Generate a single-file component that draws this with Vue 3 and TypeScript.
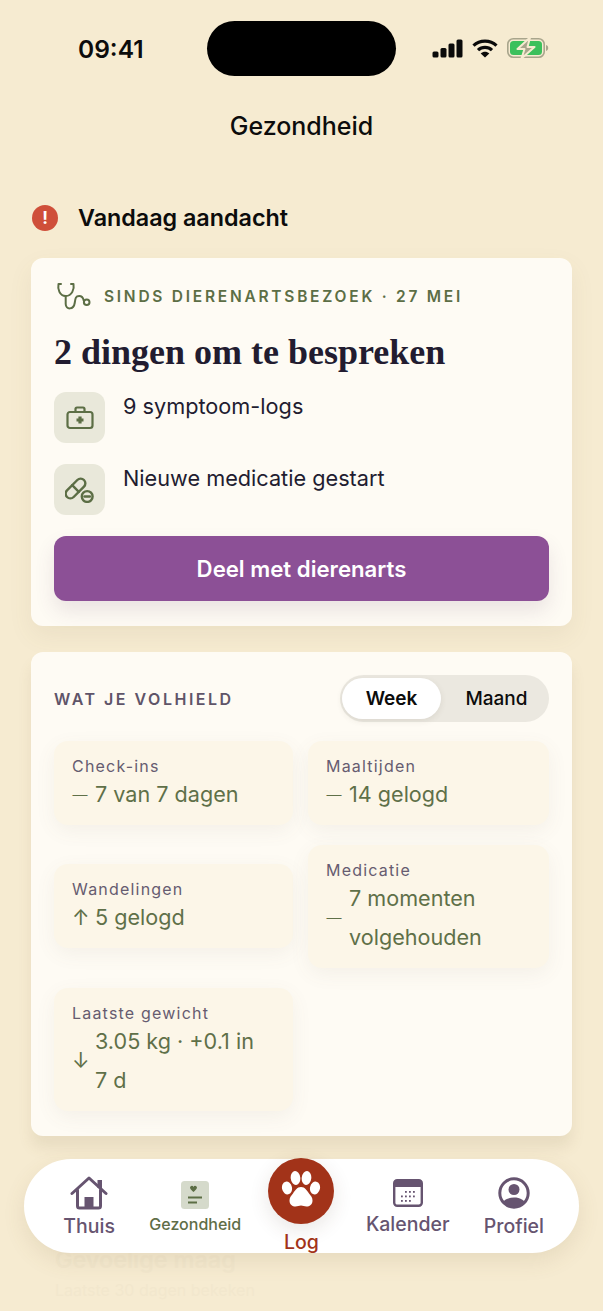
<template>
  <div class="screen">
    <header class="status">
      <span class="time">09:41</span>
      <div class="island"></div>
      <div class="status-icons">
        <svg width="31" height="19" viewBox="0 0 31 19" fill="#0a0a0a">
          <rect x="0.500" y="12.500" width="6" height="6" rx="1.500" />
          <rect x="8.500" y="9" width="6" height="9.500" rx="1.500" />
          <rect x="16.500" y="4.500" width="6" height="14" rx="1.500" />
          <rect x="24.500" y="0.500" width="6" height="18" rx="1.500" />
        </svg>
        <svg width="26" height="19" viewBox="0 0 26 19" fill="none" stroke="#0a0a0a" stroke-width="3.200">
          <path d="M1.500 6.600C7.800.6 18.200.6 24.500 6.600" />
          <path d="M6 11.200c4-3.800 10-3.800 14 0" />
          <path d="M13 18.600l-4.300-4.200c2.500-2.200 6.100-2.200 8.600 0z" fill="#0a0a0a" stroke="none" />
        </svg>
        <svg width="42" height="20" viewBox="0 0 42 20">
          <rect x="0.800" y="0.800" width="36.400" height="18.400" rx="5.500" fill="none" stroke="#a8a58c" stroke-width="1.600" />
          <rect x="3" y="3" width="32" height="14" rx="3.500" fill="#3cc05c" />
          <path d="M39 7c1.500.4 2.200 1.600 2.200 3s-.7 2.600-2.200 3z" fill="#a8a58c" />
          <path d="M23 -0.500 10.500 11H17.500L14.500 20.500 27.500 9H20.500z" fill="#a8a58c" stroke="#f6ebd1" stroke-width="2" stroke-linejoin="round" />
        </svg>
      </div>
    </header>

    <h1 class="page-title">Gezondheid</h1>

    <div class="alert-head">
      <span class="alert-dot">!</span>
      <h2>Vandaag aandacht</h2>
    </div>

    <section class="card vet-card">
      <div class="eyebrow">
        <svg width="36" height="30" viewBox="0 0 36 30" fill="none" stroke="#5c6e45" stroke-width="2" stroke-linecap="round" stroke-linejoin="round">
          <path d="M5 3H2.500C1.500 8 3.500 15 9.700 15 16 15 18.500 8 17.500 3H15" />
          <path d="M9.700 15v8c0 6 8 6 9-1 .7-5 1-7 4.500-7 3.300 0 4 2 4.500 4.500" />
          <circle cx="30.700" cy="21.300" r="2.800" />
        </svg>
        <span>SINDS DIERENARTSBEZOEK · 27 MEI</span>
      </div>
      <h3>2 dingen om te bespreken</h3>
      <ul class="todo">
        <li>
          <span class="tile">
            <svg width="28" height="24" viewBox="0 0 28 24" fill="none" stroke="#5c6e45" stroke-width="2.200" stroke-linejoin="round">
              <rect x="1.500" y="6" width="25" height="16" rx="2.500" />
              <path d="M9.500 6V3a1.500 1.500 0 0 1 1.500-1.500h6A1.500 1.500 0 0 1 18.500 3v3" />
              <path d="M14 10.500v7M10.500 14h7" stroke-width="3.200" />
            </svg>
          </span>
          <span>9 symptoom-logs</span>
        </li>
        <li>
          <span class="tile">
            <svg width="30" height="26" viewBox="0 0 30 26" fill="none" stroke="#5c6e45" stroke-width="2.400" stroke-linecap="round">
              <rect x="-12" y="-4.700" width="24" height="9.400" rx="4.700" transform="translate(10.500 11.500) rotate(-45)" />
              <path d="M7.200 8.200l6.600 6.600" />
              <circle cx="22.200" cy="19.500" r="5.400" fill="#e9e8da" />
              <path d="M19.500 19.500h5.400" />
            </svg>
          </span>
          <span>Nieuwe medicatie gestart</span>
        </li>
      </ul>
      <button class="share">Deel met dierenarts</button>
    </section>

    <section class="card habits-card">
      <div class="habits-head">
        <span class="habits-title">WAT JE VOLHIELD</span>
        <div class="toggle">
          <button
            v-for="range in ranges"
            :key="range"
            :class="{ active: range === activeRange }"
            @click="activeRange = range"
          >{{ range }}</button>
        </div>
      </div>
      <div class="stats">
        <div v-for="stat in stats" :key="stat.label" class="stat">
          <div class="stat-label">{{ stat.label }}</div>
          <div class="stat-value">
            <span class="trend" :class="{ arrow: stat.trend !== '—' }">{{ stat.trend }}</span>
            <span>{{ stat.value }}</span>
          </div>
        </div>
      </div>
    </section>

    <section class="ghost">
      <div class="ghost-title">Gevoelige maag</div>
      <div class="ghost-sub">Laatste 30 dagen bekeken</div>
    </section>

    <nav class="tabbar">
      <a class="tab">
        <span class="tab-icon">
          <svg width="38" height="34" viewBox="0 0 38 34" fill="none" stroke="#665470" stroke-width="3" stroke-linejoin="round" stroke-linecap="round">
            <path d="M2 17.500 19 2 36 17.500" />
            <path d="M7.500 14v16a2 2 0 0 0 2 2h19a2 2 0 0 0 2-2V14" />
            <rect x="27.500" y="4" width="4.500" height="8" fill="#665470" stroke="none" />
            <rect x="14.500" y="21" width="9" height="11" fill="#665470" stroke="none" />
          </svg>
        </span>
        <span class="tab-label">Thuis</span>
      </a>
      <a class="tab tab-health">
        <span class="tab-icon">
          <svg width="28" height="28" viewBox="0 0 28 28">
            <rect width="28" height="28" rx="3.500" fill="#d5dacb" />
            <path d="M9.500 5.500c1-1 2.500-.8 3 .4.500-1.200 2-1.400 3-.4 1 1.100.5 2.400-3 5.500-3.500-3.100-4-4.400-3-5.500z" fill="#5c6e45" />
            <path d="M7 16.500h14M7 21.500h9" stroke="#5c6e45" stroke-width="2" fill="none" />
          </svg>
        </span>
        <span class="tab-label">Gezondheid</span>
      </a>
      <a class="tab tab-log">
        <span class="log-circle">
          <svg width="40" height="40" viewBox="0 0 40 40" fill="#fff">
            <ellipse cx="6" cy="17" rx="5" ry="6.500" transform="rotate(-12 6 17)" />
            <ellipse cx="14.500" cy="7" rx="4.800" ry="7" transform="rotate(-6 14.500 7)" />
            <ellipse cx="25.500" cy="7" rx="4.800" ry="7" transform="rotate(6 25.500 7)" />
            <ellipse cx="34" cy="17" rx="5" ry="6.500" transform="rotate(12 34 17)" />
            <path d="M20 16c4 0 6 3.500 8 6.500 2 2.500 3.500 4 3.500 7 0 4-3 6-6 6-2.200 0-3.500-1-5.500-1s-3.300 1-5.500 1c-3 0-6-2-6-6 0-3 1.500-4.500 3.500-7 2-3 4-6.500 8-6.500z" />
          </svg>
        </span>
        <span class="tab-label">Log</span>
      </a>
      <a class="tab tab-cal">
        <span class="tab-icon">
          <svg width="30" height="28" viewBox="0 0 30 28">
            <rect x="1.200" y="1.200" width="27.600" height="25.600" rx="3" fill="#fff" stroke="#665470" stroke-width="2.400" />
            <path d="M1 4a3 3 0 0 1 3-3h22a3 3 0 0 1 3 3v4H1z" fill="#665470" />
            <g fill="#665470">
              <rect v-for="dot in calendarDots" :key="dot.x + '-' + dot.y" :x="dot.x" :y="dot.y" width="1.800" height="1.800" />
            </g>
          </svg>
        </span>
        <span class="tab-label">Kalender</span>
      </a>
      <a class="tab tab-profile">
        <span class="tab-icon">
          <svg width="32" height="32" viewBox="0 0 32 32">
            <defs>
              <clipPath id="profile-clip"><circle cx="16" cy="16" r="14" /></clipPath>
            </defs>
            <circle cx="16" cy="16" r="14.200" fill="#fff" stroke="#665470" stroke-width="3" />
            <circle cx="16" cy="12.500" r="5.500" fill="#665470" />
            <path d="M3 30c1-7 7-9.500 13-9.500S28 23 29 30z" fill="#665470" clip-path="url(#profile-clip)" />
          </svg>
        </span>
        <span class="tab-label">Profiel</span>
      </a>
    </nav>
  </div>
</template>

<script setup lang="ts">
import { ref } from 'vue';

interface Stat {
  label: string;
  trend: string;
  value: string;
}

const ranges = ['Week', 'Maand'];
const activeRange = ref('Week');

const stats: Stat[] = [
  { label: 'Check-ins', trend: '—', value: '7 van 7 dagen' },
  { label: 'Maaltijden', trend: '—', value: '14 gelogd' },
  { label: 'Wandelingen', trend: '↑', value: '5 gelogd' },
  { label: 'Medicatie', trend: '—', value: '7 momenten volgehouden' },
  { label: 'Laatste gewicht', trend: '↓', value: '3.05 kg · +0.1 in 7 d' },
];

const calendarDots: { x: number; y: number }[] = [];
for (const y of [12, 16.5, 21]) {
  for (const x of [8, 12, 16, 20]) {
    if (!(y === 12 && x === 8) && !(y === 21 && x === 20)) calendarDots.push({ x, y });
  }
}
</script>

<style>
html,
body {
  margin: 0;
  background: #f6ebd1;
}
</style>

<style scoped>
.screen {
  position: relative;
  width: 603px;
  height: 1311px;
  overflow: hidden;
  background: #f6ebd1;
  font-family: Inter, "Liberation Sans", sans-serif;
  color: #0c0c0c;
}

.status {
  height: 76px;
  padding: 21px 0 0 78px;
  box-sizing: border-box;
  display: flex;
  align-items: flex-start;
}

.time {
  flex: none;
  width: 129px;
  margin-top: 12px;
  font-size: 24.500px;
  line-height: 32px;
  font-weight: 600;
}

.island {
  flex: none;
  width: 189px;
  height: 55px;
  border-radius: 28px;
  background: #000;
}

.status-icons {
  flex: none;
  margin-left: 36px;
  margin-top: 17px;
  display: flex;
  align-items: center;
  gap: 9px;
}

.status-icons svg {
  display: block;
}

.page-title {
  margin: 34px 0 0;
  text-align: center;
  font-size: 25px;
  line-height: 32px;
  font-weight: 500;
}

.alert-head {
  display: flex;
  align-items: center;
  margin: 58px 0 0 32px;
  height: 36px;
}

.alert-dot {
  width: 26px;
  height: 26px;
  border-radius: 50%;
  background: #cf4f3a;
  color: #fff;
  font-size: 17px;
  font-weight: 700;
  line-height: 26px;
  text-align: center;
}

.alert-head h2 {
  margin: 0 0 0 20px;
  font-size: 23.300px;
  font-weight: 600;
  line-height: 30px;
}

.card {
  margin: 0 31px;
  border-radius: 12px;
  background: #fefbf4;
  box-shadow: 0 10px 24px rgba(120, 100, 60, 0.08);
  box-sizing: border-box;
}

.vet-card {
  margin-top: 22px;
  height: 368px;
  padding: 23px 23px;
}

.eyebrow {
  display: flex;
  align-items: center;
  gap: 12px;
  height: 30px;
  padding-left: 2px;
  color: #5c6e45;
  font-size: 15.500px;
  font-weight: 600;
  letter-spacing: 2.750px;
}

.eyebrow svg {
  flex: none;
}

.vet-card h3 {
  margin: 19px 0 0;
  font-family: "Liberation Serif", "DejaVu Serif", serif;
  font-size: 36px;
  line-height: 44px;
  font-weight: 700;
  color: #221c30;
}

.todo {
  list-style: none;
  margin: 18px 0 0;
  padding: 0;
}

.todo li {
  display: flex;
  gap: 18px;
  margin-bottom: 21px;
  font-size: 21.700px;
  line-height: 28px;
  color: #221c30;
}

.tile {
  flex: none;
  width: 51px;
  height: 51px;
  border-radius: 12px;
  background: #e9e8da;
  display: flex;
  align-items: center;
  justify-content: center;
}

.share {
  display: block;
  width: 100%;
  height: 65px;
  margin-top: 2px;
  border: 0;
  border-radius: 12px;
  background: #8c5096;
  color: #fff;
  font-family: inherit;
  font-size: 22.200px;
  font-weight: 600;
  box-shadow: 0 10px 20px rgba(90, 60, 100, 0.12);
}

.habits-card {
  margin-top: 26px;
  height: 484px;
  padding: 23px 23px 0;
  box-shadow: 0 12px 14px rgba(120, 100, 60, 0.1);
}

.habits-head {
  display: flex;
  align-items: center;
  justify-content: space-between;
  height: 47px;
}

.habits-title {
  font-size: 16px;
  font-weight: 600;
  letter-spacing: 2.500px;
  color: #5f5468;
}

.toggle {
  width: 209px;
  height: 47px;
  padding: 3px 2px;
  box-sizing: border-box;
  border-radius: 24px;
  background: #ebe8e0;
  display: flex;
}

.toggle button {
  flex: none;
  width: 99px;
  border: 0;
  border-radius: 21px;
  background: transparent;
  font-family: inherit;
  font-size: 19px;
  font-weight: 500;
  color: #0c0c0c;
  padding: 0;
}

.toggle button:last-child {
  width: 106px;
  padding-left: 5px;
}

.toggle button.active {
  background: #fff;
  font-weight: 600;
  box-shadow: 0 2px 6px rgba(80, 70, 50, 0.1);
}

.stats {
  margin-top: 19px;
  display: grid;
  grid-template-columns: 239px 241px;
  column-gap: 15px;
  row-gap: 20px;
  align-items: center;
}

.stat {
  padding: 17px 30px 10px 18px;
  border-radius: 14px;
  background: #fcf6e8;
  box-shadow: 0 6px 20px rgba(110, 100, 80, 0.07);
}

.stat-label {
  font-size: 16px;
  line-height: 17px;
  letter-spacing: 1.200px;
  white-space: nowrap;
  color: #665c70;
}

.stat-value {
  display: flex;
  align-items: center;
  gap: 7px;
  font-size: 21.600px;
  line-height: 39.500px;
  color: #5f7048;
}

.trend {
  flex: none;
  width: 16px;
  font-size: 15px;
  font-weight: 300;
  text-align: center;
}

.trend.arrow {
  font-size: 21px;
  font-weight: 400;
}

.ghost {
  margin: 110px 0 0 55px;
  color: #f2e7cd;
}

.ghost-title {
  font-size: 23.300px;
  line-height: 28px;
  font-weight: 600;
}

.ghost-sub {
  font-size: 16px;
  line-height: 24px;
  margin-top: 4px;
}

.tabbar {
  position: absolute;
  left: 24px;
  top: 1159px;
  width: 555px;
  height: 94px;
  box-sizing: border-box;
  padding: 17px 12px 0;
  border-radius: 47px;
  background: #fff;
  box-shadow: 0 8px 22px rgba(120, 100, 60, 0.12);
  display: grid;
  grid-template-columns: repeat(5, 1fr);
}

.tab {
  display: flex;
  flex-direction: column;
  align-items: center;
  color: #665470;
}

.tab-icon {
  height: 34px;
  display: flex;
  align-items: flex-end;
  justify-content: center;
}

.tab-icon svg {
  display: block;
}

.tab-label {
  margin-top: 4px;
  font-size: 19.500px;
  line-height: 24px;
  font-weight: 500;
  white-space: nowrap;
}

.tab-health {
  color: #5f6e47;
}

.tab-health .tab-icon {
  height: 33px;
}

.tab-health .tab-label {
  margin-top: 3px;
  font-size: 16px;
}

.tab-log {
  margin-top: -18px;
  color: #a23319;
}

.log-circle {
  width: 66px;
  height: 66px;
  border-radius: 50%;
  background: #a23319;
  display: flex;
  align-items: center;
  justify-content: center;
  box-shadow: 0 6px 20px rgba(70, 50, 30, 0.12);
}

.tab-log .tab-label {
  margin-top: 6px;
}

.tab-cal .tab-icon {
  height: 31px;
}

.tab-cal .tab-label {
  margin-top: 5px;
}

.tab-profile .tab-icon {
  height: 33px;
}

.tab-profile .tab-label {
  margin-top: 5px;
}
</style>
